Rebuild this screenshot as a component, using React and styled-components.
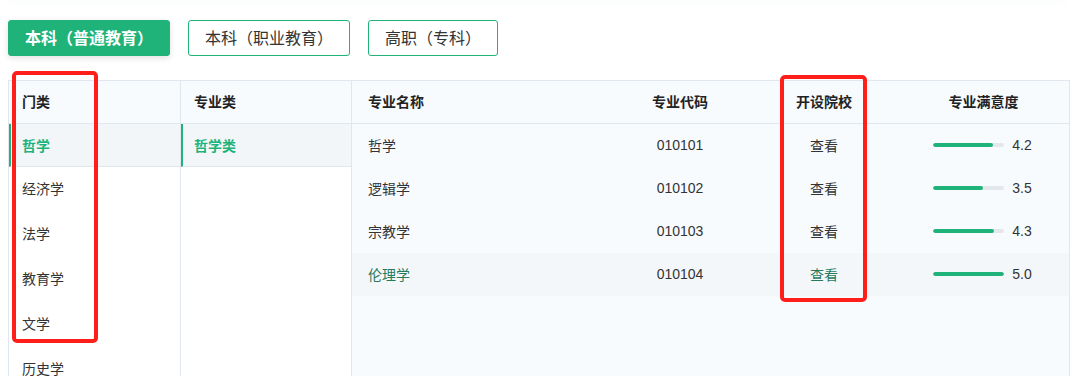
import React from "react";
import styled, { createGlobalStyle } from "styled-components";

const GlobalStyle = createGlobalStyle`
  body {
    margin: 0;
    background: #ffffff;
    font-family: "Noto Sans CJK SC", "Noto Sans", sans-serif;
    color: #333;
  }
`;

const GREEN = "#1fb37a";

const Page = styled.div`
  position: relative;
  width: 1074px;
  height: 376px;
  overflow: hidden;
`;

const TopShade = styled.div`
  height: 2px;
  margin: 0 8px;
  background: #fbfefd;
  box-shadow: 0 1px 4px rgba(40, 180, 130, 0.06);
`;

const Tabs = styled.div`
  display: flex;
  gap: 18px;
  padding: 18px 8px 0;
`;

const Tab = styled.button`
  height: 36px;
  padding: 0 16px 2px;
  border-radius: 3px;
  font-family: "Noto Sans CJK SC", sans-serif;
  font-size: 16px;
  font-weight: ${(p) => (p.$active ? 700 : 400)};
  color: ${(p) => (p.$active ? "#fff" : "#333")};
  background: ${(p) => (p.$active ? GREEN : "#fff")};
  border: 1px solid ${GREEN};
  box-shadow: ${(p) => (p.$active ? "0 2px 6px rgba(0,0,0,0.12)" : "none")};
  cursor: pointer;
`;

const Table = styled.div`
  display: flex;
  margin: 24px 4px 0 8px;
  border: 1px solid #e1e7ef;
  border-bottom: none;
  height: 300px;
`;

const Column = styled.div`
  width: ${(p) => p.$w}px;
  flex-shrink: 0;
  border-right: 1px solid #e1e7ef;
  background: #fff;
`;

const HeadCell = styled.div`
  height: 43px;
  display: flex;
  align-items: center;
  padding: 0 0 3px 13px;
  box-sizing: border-box;
  background: #f7fbfe;
  border-bottom: 1px solid #e1e7ef;
  font-size: 14px;
  font-weight: 700;
  color: #222;
`;

const ListItem = styled.div`
  height: ${(p) => (p.$active ? 43 : 45)}px;
  box-sizing: border-box;
  display: flex;
  align-items: center;
  padding: 0 0 ${(p) => (p.$active ? 0 : 3)}px ${(p) => (p.$active ? 11 : 13)}px;
  font-size: 14px;
  color: ${(p) => (p.$active ? GREEN : "#333")};
  font-weight: ${(p) => (p.$active ? 700 : 400)};
  background: ${(p) => (p.$active ? "#f3f6f9" : "transparent")};
  border-left: ${(p) => (p.$active ? `2px solid ${GREEN}` : "none")};
  border-bottom: ${(p) => (p.$active ? "1px solid #e1e7ef" : "none")};
`;

const Major = styled.div`
  flex: 1;
  background: #f8fbfe;
`;

const Row = styled.div`
  display: grid;
  grid-template-columns: 258px 140px 148px 1fr;
  height: 43px;
  box-sizing: border-box;
  padding-bottom: ${(p) => (p.$head ? 3 : 1)}px;
  align-items: center;
  background: ${(p) => (p.$head ? "#f7fbfe" : p.$hl ? "#f3f7fa" : "transparent")};
  border-bottom: ${(p) => (p.$head ? "1px solid #e1e7ef" : "none")};
  font-size: 14px;
  font-weight: ${(p) => (p.$head ? 700 : 400)};
  color: ${(p) => (p.$head ? "#222" : "#333")};
`;

const NameCell = styled.div`
  padding-left: 16px;
  color: ${(p) => (p.$hl ? "#267a5c" : "inherit")};
`;

const Center = styled.div`
  text-align: center;
  font-family: ${(p) => (p.$num ? '"Liberation Sans", Arial, sans-serif' : "inherit")};
  color: ${(p) => (p.$hl ? "#267a5c" : "inherit")};
`;

const Score = styled.div`
  display: flex;
  align-items: center;
  justify-content: center;
  gap: 8px;
  padding-right: 2px;
`;

const Track = styled.div`
  width: 71px;
  height: 4px;
  border-radius: 2px;
  background: #e4e7eb;
  overflow: hidden;
`;

const Fill = styled.div`
  height: 100%;
  border-radius: 2px;
  background: ${GREEN};
`;

const ScoreText = styled.span`
  font-family: "Liberation Sans", Arial, sans-serif;
  font-size: 14px;
  color: #333;
`;

const Mark = styled.div`
  position: absolute;
  border: 4px solid #ff1f1a;
  border-radius: 5px;
  pointer-events: none;
`;

const categories = ["哲学", "经济学", "法学", "教育学", "文学", "历史学"];

const majors = [
  { name: "哲学", code: "010101", score: 4.2 },
  { name: "逻辑学", code: "010102", score: 3.5 },
  { name: "宗教学", code: "010103", score: 4.3 },
  { name: "伦理学", code: "010104", score: 5.0, hl: true },
];

export default function App() {
  return (
    <Page>
      <GlobalStyle />
      <TopShade />
      <Tabs>
        <Tab $active>本科（普通教育）</Tab>
        <Tab>本科（职业教育）</Tab>
        <Tab>高职（专科）</Tab>
      </Tabs>
      <Table>
        <Column $w={171}>
          <HeadCell>门类</HeadCell>
          {categories.map((c, i) => (
            <ListItem key={c} $active={i === 0}>
              {c}
            </ListItem>
          ))}
        </Column>
        <Column $w={170}>
          <HeadCell>专业类</HeadCell>
          <ListItem $active>哲学类</ListItem>
        </Column>
        <Major>
          <Row $head>
            <NameCell>专业名称</NameCell>
            <Center>专业代码</Center>
            <Center>开设院校</Center>
            <Center>专业满意度</Center>
          </Row>
          {majors.map((m) => (
            <Row key={m.code} $hl={m.hl}>
              <NameCell $hl={m.hl}>{m.name}</NameCell>
              <Center $num>{m.code}</Center>
              <Center $hl={m.hl}>查看</Center>
              <Score>
                <Track>
                  <Fill style={{ width: `${(m.score / 5) * 100}%` }} />
                </Track>
                <ScoreText>{m.score.toFixed(1)}</ScoreText>
              </Score>
            </Row>
          ))}
        </Major>
      </Table>
      <Mark style={{ left: 12, top: 71, width: 78, height: 264 }} />
      <Mark style={{ left: 780, top: 75, width: 79, height: 219 }} />
    </Page>
  );
}
